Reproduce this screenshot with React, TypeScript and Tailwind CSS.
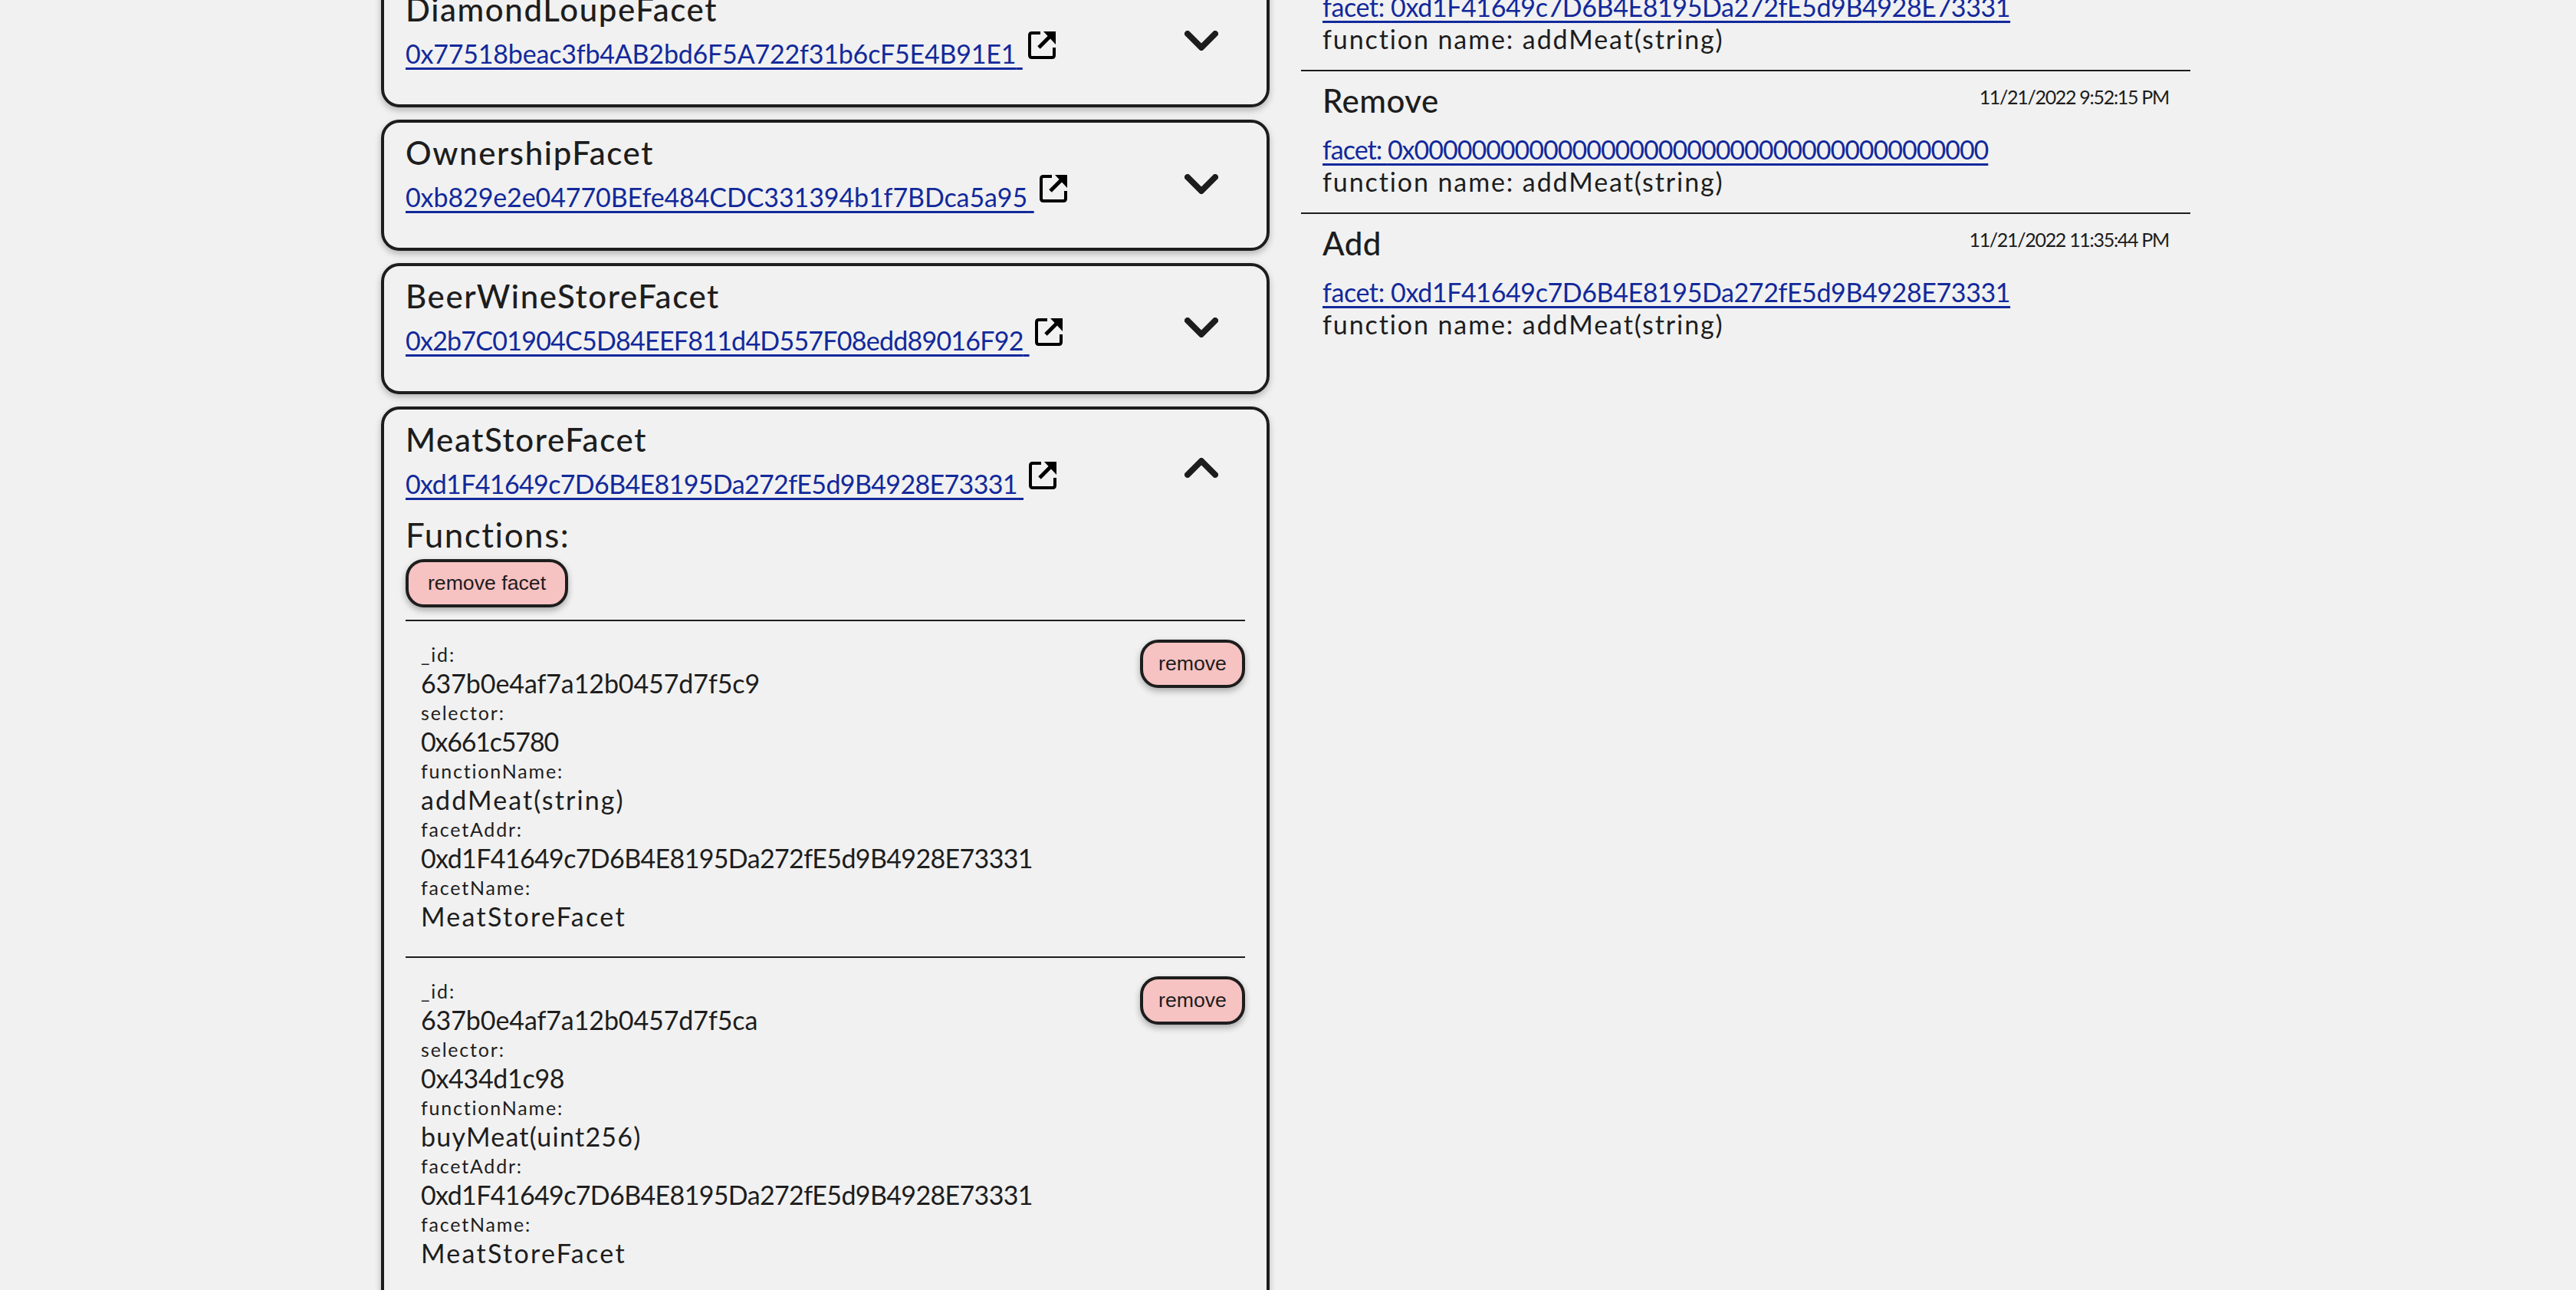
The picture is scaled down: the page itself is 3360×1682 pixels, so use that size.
import React from 'react'

const addr = '0xd1F41649c7D6B4E8195Da272fE5d9B4928E73331'

const fn1 = [
  ['_id', '637b0e4af7a12b0457d7f5c9', 'tracking-[-0.1px]'],
  ['selector', '0x661c5780', 'tracking-[-1.2px]'],
  ['functionName', 'addMeat(string)', 'tracking-[2.1px]'],
  ['facetAddr', addr, 'tracking-[-0.64px]'],
  ['facetName', 'MeatStoreFacet', 'tracking-[2.3px]'],
]
const fn2 = [
  ['_id', '637b0e4af7a12b0457d7f5ca', 'tracking-[-0.1px]'],
  ['selector', '0x434d1c98', 'tracking-[-0.3px]'],
  ['functionName', 'buyMeat(uint256)', 'tracking-[1.25px]'],
  ['facetAddr', addr, 'tracking-[-0.64px]'],
  ['facetName', 'MeatStoreFacet', 'tracking-[2.3px]'],
]

const events = [
  { action: 'Add', date: '11/21/2022 11:35:44 PM', facet: addr, track: 'tracking-[-0.4px]' },
  { action: 'Remove', date: '11/21/2022 9:52:15 PM', facet: '0x0000000000000000000000000000000000000000', track: 'tracking-[-1px]' },
  { action: 'Add', date: '11/21/2022 11:35:44 PM', facet: addr, track: 'tracking-[-0.4px]' },
]

function Chevron({ up }: { up?: boolean }) {
  return (
    <svg width="44" height="26" viewBox="0 0 44 26" fill="none" className={up ? 'rotate-180' : ''}>
      <path d="M4 4 L22 22 L40 4" stroke="#1d1d1d" strokeWidth="8" strokeLinecap="round" strokeLinejoin="round" />
    </svg>
  )
}

function ExternalIcon() {
  return (
    <svg width="36" height="36" viewBox="0 0 36 36" fill="none" className="ml-[7px] mt-[3px] shrink-0">
      <path d="M16 2 H5 Q2 2 2 5 V31 Q2 34 5 34 H31 Q34 34 34 31 V21" stroke="#000" strokeWidth="4" />
      <path d="M14 21 L30 5" stroke="#000" strokeWidth="5" />
      <path d="M20 0 H36 V17 Z" fill="#000" />
    </svg>
  )
}

function PinkButton({ label, wide }: { label: string; wide?: boolean }) {
  return (
    <button className={`h-[63px] rounded-[24px] border-4 border-[#1d1d1d] bg-[#f7c2c2] pb-[2px] text-[26.67px] text-[#1d1d1d] shadow-[0_4px_8px_rgba(0,0,0,0.3)] font-['Liberation_Sans',sans-serif] ${wide ? 'w-[212px]' : 'w-[137px]'}`}>
      {label}
    </button>
  )
}

function Facet({ name, address, track, open, children }: { name: string; address: string; track: string; open?: boolean; children?: React.ReactNode }) {
  return (
    <article className="mb-[16px] rounded-[24px] border-4 border-[#1d1d1d] px-[28px] pb-[30px] pt-[13px] shadow-[0_4px_8px_rgba(0,0,0,0.25)]">
      <div className="flex h-[120px]">
        <div className="flex-1">
          <h3 className="h-[52px] text-[42px] leading-[52px] font-medium tracking-[1.6px]">{name}</h3>
          <div className="flex items-start">
            <a className={`mt-[12px] text-[34px] leading-[40px] text-[#12299b] underline decoration-[3px] underline-offset-[5px] ${track}`} href="#">
              {address}&nbsp;
            </a>
            <ExternalIcon />
          </div>
        </div>
        <div className={`mr-[35px] ${open ? 'pt-[50px]' : 'pt-[54px]'}`}>
          <Chevron up={open} />
        </div>
      </div>
      {children}
    </article>
  )
}

function FnRow({ rows }: { rows: string[][] }) {
  return (
    <div className="flex justify-between border-t-2 border-[#1d1d1d] pb-[31px] pt-[24px]">
      <dl className="pl-[20px] pt-[2px]">
        {rows.map(([k, v, track]) => (
          <div key={k + v}>
            <dt className="h-[34px] text-[25px] leading-[34px] tracking-[1.8px]">{k}:</dt>
            <dd className={`h-[42px] text-[34px] leading-[42px] ${track}`}>{v}</dd>
          </div>
        ))}
      </dl>
      <div>
        <PinkButton label="remove" />
      </div>
    </div>
  )
}

export default function App() {
  return (
    <div className="h-[1682px] overflow-hidden bg-[#f1f1f1] text-[#1d1d1d] font-['Lato',sans-serif]">
      <div className="-mt-[31px] ml-[497px] grid w-[2360px] grid-cols-[1159px_1160px] gap-x-[41px]">
        <section>
          <Facet name="DiamondLoupeFacet" address="0x77518beac3fb4AB2bd6F5A722f31b6cF5E4B91E1" track="tracking-[-0.2px]" />
          <Facet name="OwnershipFacet" address="0xb829e2e04770BEfe484CDC331394b1f7BDca5a95" track="tracking-[-0.1px]" />
          <Facet name="BeerWineStoreFacet" address="0x2b7C01904C5D84EEF811d4D557F08edd89016F92" track="tracking-[-0.76px]" />
          <Facet name="MeatStoreFacet" address={addr} track="tracking-[-0.64px]" open>
            <p className="h-[60px] text-[44px] leading-[60px] tracking-[1.5px]">Functions:</p>
            <div className="pb-[16px] pt-[2px]">
              <PinkButton label="remove facet" wide />
            </div>
            <FnRow rows={fn1} />
            <FnRow rows={fn2} />
          </Facet>
        </section>
        <section className="-mt-[62px]">
          {events.map((e, i) => (
            <div key={i} className="h-[186px] border-b-2 border-[#1d1d1d] px-[28px] pt-[16px] last:border-b-0">
              <div className="flex h-[52px] justify-between">
                <h4 className="text-[42px] leading-[44px] font-medium tracking-[0.5px]">{e.action}</h4>
                <span className="text-[25px] leading-[34px] tracking-[-1.3px]">{e.date}</span>
              </div>
              <a href="#" className={`mt-[12px] block w-fit text-[34px] leading-[44px] text-[#12299b] underline decoration-[3px] underline-offset-[5px] ${e.track}`}>
                facet: {e.facet}
              </a>
              <p className="text-[34px] leading-[40px] tracking-[1.9px]">function name: addMeat(string)</p>
            </div>
          ))}
        </section>
      </div>
    </div>
  )
}
